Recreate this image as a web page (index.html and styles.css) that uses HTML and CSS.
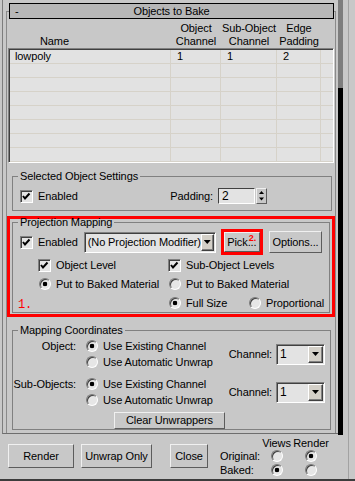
FILE: index.html
```html
<!DOCTYPE html>
<html lang="en">
<head>
  <meta charset="UTF-8">
  <meta name="viewport" content="width=device-width, initial-scale=1.0">
  <title>Render To Texture</title>
  <link rel="stylesheet" href="styles.css">
</head>
<body>
  <div class="app">
    <div class="main">
      <div class="scroller">
        <div class="rollout">
          <div class="rollout-title">
            <span class="minus">-</span>
            <span>Objects to Bake</span>
            <span></span>
          </div>

          <div class="list-head">
            <div class="head-name">Name</div>
            <div class="head-col">Object<br>Channel</div>
            <div class="head-col">Sub-Object<br>Channel</div>
            <div class="head-col">Edge<br>Padding</div>
          </div>
          <div class="list">
            <div class="row"><span>lowpoly</span><span>1</span><span>1</span><span>2</span><span></span></div>
            <div class="row"><span></span><span></span><span></span><span></span><span></span></div>
            <div class="row"><span></span><span></span><span></span><span></span><span></span></div>
            <div class="row"><span></span><span></span><span></span><span></span><span></span></div>
            <div class="row"><span></span><span></span><span></span><span></span><span></span></div>
            <div class="row"><span></span><span></span><span></span><span></span><span></span></div>
            <div class="row"><span></span><span></span><span></span><span></span><span></span></div>
            <div class="row"><span></span><span></span><span></span><span></span><span></span></div>
          </div>

          <fieldset class="group group-sel">
            <legend>Selected Object Settings</legend>
            <div class="sel-row">
              <label class="opt"><span class="cb"><svg viewBox="0 0 11 11"><polyline points="2,5 4,7.5 8.5,2.5"/></svg></span>Enabled</label>
              <div class="spinner">
                <span>Padding:</span>
                <span class="spin-field">2</span>
                <span class="spin-btns"><svg viewBox="0 0 9 14"><path d="M4.5 2 L7 5 L2 5 Z"/><path d="M2 8.5 L7 8.5 L4.5 11.5 Z"/></svg></span>
              </div>
            </div>
          </fieldset>

          <div class="mark mark-1">
            <fieldset class="group group-proj">
              <legend>Projection Mapping</legend>
              <div class="proj-top">
                <label class="opt proj-enabled"><span class="cb"><svg viewBox="0 0 11 11"><polyline points="2,5 4,7.5 8.5,2.5"/></svg></span>Enabled</label>
                <div class="combo proj-combo">
                  <span class="combo-text">(No Projection Modifier)</span>
                  <span class="combo-btn"></span>
                </div>
                <div class="mark mark-2">
                  <button class="btn">Pick...</button>
                  <span class="mark-num num-2">2.</span>
                </div>
                <button class="btn options">Options...</button>
              </div>
              <div class="proj-grid">
                <label class="opt c2"><span class="cb"><svg viewBox="0 0 11 11"><polyline points="2,5 4,7.5 8.5,2.5"/></svg></span>Object Level</label>
                <label class="opt c3"><span class="cb"><svg viewBox="0 0 11 11"><polyline points="2,5 4,7.5 8.5,2.5"/></svg></span>Sub-Object Levels</label>
                <label class="opt c2"><span class="rb on"></span>Put to Baked Material</label>
                <label class="opt c3"><span class="rb"></span>Put to Baked Material</label>
                <span class="mark-num num-1">1.</span>
                <div class="opt-pair c3">
                  <label class="opt full-size"><span class="rb on"></span>Full Size</label>
                  <label class="opt"><span class="rb"></span>Proportional</label>
                </div>
              </div>
            </fieldset>
          </div>

          <fieldset class="group group-map">
            <legend>Mapping Coordinates</legend>
            <div class="map-block">
              <div class="map-label">Object:</div>
              <div class="map-opts">
                <label class="opt"><span class="rb on"></span>Use Existing Channel</label>
                <label class="opt"><span class="rb"></span>Use Automatic Unwrap</label>
              </div>
              <div class="map-chan">
                <span>Channel:</span>
                <div class="combo chan-combo"><span class="combo-text">1</span><span class="combo-btn"></span></div>
              </div>
            </div>
            <div class="map-block">
              <div class="map-label">Sub-Objects:</div>
              <div class="map-opts">
                <label class="opt"><span class="rb on"></span>Use Existing Channel</label>
                <label class="opt"><span class="rb"></span>Use Automatic Unwrap</label>
              </div>
              <div class="map-chan">
                <span>Channel:</span>
                <div class="combo chan-combo"><span class="combo-text">1</span><span class="combo-btn"></span></div>
              </div>
            </div>
            <button class="btn clear">Clear Unwrappers</button>
          </fieldset>
        </div>
      </div>

      <div class="actions">
        <button class="btn act render">Render</button>
        <button class="btn act unwrap">Unwrap Only</button>
        <button class="btn act close">Close</button>
        <div class="views">
          <span></span>
          <span class="vh">Views</span>
          <span class="vh">Render</span>
          <span class="vl">Original:</span>
          <span class="rb"></span>
          <span class="rb on"></span>
          <span class="vl">Baked:</span>
          <span class="rb on"></span>
          <span class="rb"></span>
        </div>
      </div>
    </div>
    <div class="side"><div class="side-bar"></div></div>
  </div>
</body>
</html>
```

FILE: styles.css
```css
* {
  box-sizing: border-box;
}
body {
  margin: 0;
  width: 355px;
  height: 481px;
  overflow: hidden;
  background: #c8c8c8;
  font-family: "Liberation Sans", Arial, sans-serif;
  font-size: 11px;
  line-height: 13px;
  letter-spacing: -0.1px;
  color: #000;
}

/* window frame */
.app {
  display: flex;
  height: 481px;
  border-bottom: 2px solid #3c3c3c;
}
.main {
  width: 338px;
  display: flex;
  flex-direction: column;
}
.side {
  flex: 1;
  background: linear-gradient(to right, transparent 10px, #a2a2a2 10px, #a2a2a2 11px, transparent 11px);
}
.side-bar {
  width: 5px;
  height: 435px;
  background: linear-gradient(#7d7d7d 88px, #000 88px);
}
.scroller {
  height: 434px;
  margin-left: 2px;
  border-left: 1px solid #7d7d7d;
  border-bottom: 1px solid #6e6e6e;
  overflow: hidden;
}

/* rollout */
.rollout {
  width: 330px;
  margin: 11px 0 0 3px;
  padding-bottom: 12px;
  border: 1px solid #8a8a8a;
  border-bottom: 0;
}
.rollout-title {
  display: grid;
  grid-template-columns: 1fr auto 1fr;
  height: 16px;
  margin: -9px 1px 0 2px;
  border: 1px solid #000;
  background: #b7b7b7;
  line-height: 14px;
}
.minus {
  padding-left: 5px;
}

/* object list */
.list-head,
.row {
  display: grid;
  grid-template-columns: 161px 50px 56px 44px 1fr;
}
.list-head {
  height: 29px;
  margin: 0 1px;
  padding: 3px 0 0 2px;
}
.head-name {
  padding: 13px 0 0 30px;
}
.head-col {
  text-align: center;
}
.list {
  height: 115px;
  margin: 0 1px;
  padding: 1px 0 0 1px;
  border: 1px solid;
  border-color: #808080 #fff #fff #808080;
  box-shadow: inset 1px 1px 0 #404040;
  background: #e2e2e2;
  overflow: hidden;
}
.row {
  height: 14px;
  border-bottom: 1px solid #d6d2c9;
}
.row span {
  padding-left: 6px;
  border-right: 1px solid #d6d2c9;
}
.row span:first-child {
  padding-left: 5px;
}
.row span:last-child {
  border-right: 0;
}

/* group boxes */
.group {
  min-width: 0;
  margin: 7px 3px 0 5px;
  padding: 6px 7px 6px;
  border: 1px solid #808080;
}
.group legend {
  margin-left: -2px;
  padding: 0 2px;
  line-height: 12px;
}

/* controls */
.opt {
  display: flex;
  align-items: center;
  white-space: nowrap;
}
.cb {
  flex: none;
  width: 13px;
  height: 13px;
  margin-right: 5px;
  border: 1px solid;
  border-color: #808080 #fff #fff #808080;
  box-shadow: inset 1px 1px 0 #404040;
  background: #e4e4e4;
}
.cb svg {
  display: block;
  width: 11px;
  height: 11px;
  fill: none;
  stroke: #000;
  stroke-width: 2;
}
.rb {
  flex: none;
  width: 12px;
  height: 12px;
  margin: 0 5px 0 1px;
  border: 1px solid;
  border-color: #7a7a7a #fff #fff #7a7a7a;
  border-radius: 50%;
  box-shadow: inset 1px 1px 0 #404040;
  background: #e6e6e6;
}
.rb.on {
  background: radial-gradient(circle, #000 2px, #e6e6e6 2.6px);
}
.btn {
  padding: 0;
  font: inherit;
  letter-spacing: inherit;
  color: #000;
  background: #c8c8c8;
  border: 1px solid;
  border-color: #f0f0f0 #5c5c5c #5c5c5c #f0f0f0;
}
.combo {
  display: flex;
  height: 21px;
  padding: 1px;
  border: 1px solid;
  border-color: #808080 #fff #fff #808080;
  box-shadow: inset 1px 1px 0 #404040;
  background: #e3e3e3;
}
.combo-text {
  flex: 1;
  overflow: hidden;
  padding-left: 2px;
  white-space: nowrap;
  line-height: 17px;
}
.combo-btn {
  flex: none;
  display: flex;
  align-items: center;
  justify-content: center;
  width: 13px;
  background: #d4d0c8;
  border: 1px solid;
  border-color: #fff #404040 #404040 #fff;
  box-shadow: inset -1px -1px 0 #808080;
}
.combo-btn::after {
  content: "";
  width: 7px;
  height: 4px;
  background: #000;
  clip-path: polygon(0 0, 100% 0, 50% 100%);
}

/* selected object settings */
.sel-row {
  display: flex;
  align-items: center;
  height: 16px;
}
.spinner {
  display: flex;
  align-items: center;
  margin-left: auto;
  margin-right: 57px;
}
.spin-field {
  width: 37px;
  height: 16px;
  margin: 0 1px 0 5px;
  padding-left: 3px;
  border: 1px solid;
  border-color: #404040 #fff #fff #404040;
  background: #e3e3e3;
  font-size: 12px;
  line-height: 14px;
}
.spin-btns {
  width: 11px;
  height: 16px;
  border: 1px solid;
  border-color: #f0f0f0 #5c5c5c #5c5c5c #f0f0f0;
}
.spin-btns svg {
  display: block;
  width: 9px;
  height: 14px;
  fill: #000;
}

/* projection mapping */
.mark {
  border: 3px solid #f00;
}
.mark-1 {
  margin-top: 5px;
}
.mark-1 .group {
  margin: -3px 2px 1px 2px;
  padding: 1px 7px 0;
}
.mark-num {
  color: #f00;
}
.proj-top {
  display: flex;
  align-items: center;
  height: 26px;
}
.proj-enabled {
  width: 65px;
}
.proj-combo {
  width: 132px;
}
.mark-2 {
  position: relative;
  width: 43px;
  height: 26px;
  margin-left: 5px;
}
.mark-2 .btn {
  display: block;
  width: 100%;
  height: 100%;
}
.num-2 {
  position: absolute;
  left: 25px;
  top: 2px;
  font-size: 9px;
  font-weight: bold;
  line-height: 9px;
}
.options {
  width: 54px;
  height: 22px;
  margin-left: 6px;
}
.proj-grid {
  display: grid;
  grid-template-columns: 18px 130px auto;
  grid-auto-rows: 18px;
  row-gap: 1px;
  align-items: center;
  margin-top: 1px;
}
.c2 {
  grid-column: 2;
}
.c3 {
  grid-column: 3;
}
.num-1 {
  grid-column: 1;
  align-self: end;
  margin-left: -2px;
  font-family: "Liberation Mono", monospace;
  font-size: 12px;
  line-height: 13px;
}
.opt-pair {
  display: flex;
}
.full-size {
  width: 80px;
}

/* mapping coordinates */
.group-map {
  margin-right: 4px;
  padding: 2px 5px 0 1px;
}
.group-map legend {
  margin-left: 4px;
}
.map-block {
  display: grid;
  grid-template-columns: 62px 1fr auto;
  align-items: center;
}
.map-block + .map-block {
  margin-top: 6px;
}
.map-label {
  align-self: start;
  display: flex;
  justify-content: flex-end;
  white-space: nowrap;
  line-height: 16px;
}
.map-opts {
  margin-left: 9px;
}
.map-opts .opt {
  height: 16px;
}
.map-chan {
  display: flex;
  align-items: center;
  gap: 4px;
}
.chan-combo {
  width: 49px;
}
.chan-combo .combo-text {
  font-size: 12px;
}
.chan-combo .combo-btn {
  width: 15px;
}
.clear {
  display: block;
  width: 111px;
  height: 17px;
  margin: 4px auto 0;
}

/* bottom buttons */
.actions {
  display: flex;
  align-items: flex-start;
  padding-left: 8px;
}
.act {
  height: 24px;
  margin-top: 10px;
}
.render {
  width: 66px;
}
.unwrap {
  width: 71px;
  margin-left: 7px;
}
.close {
  width: 38px;
  margin-left: 18px;
}
.views {
  display: grid;
  grid-template-columns: 43px 31px 38px;
  grid-template-rows: 12px 14px 14px;
  align-items: center;
  margin: 3px 0 0 10px;
}
.views .rb {
  margin: 0;
  justify-self: center;
}
.vl {
  padding-left: 2px;
}
.vh {
  text-align: center;
}
```
